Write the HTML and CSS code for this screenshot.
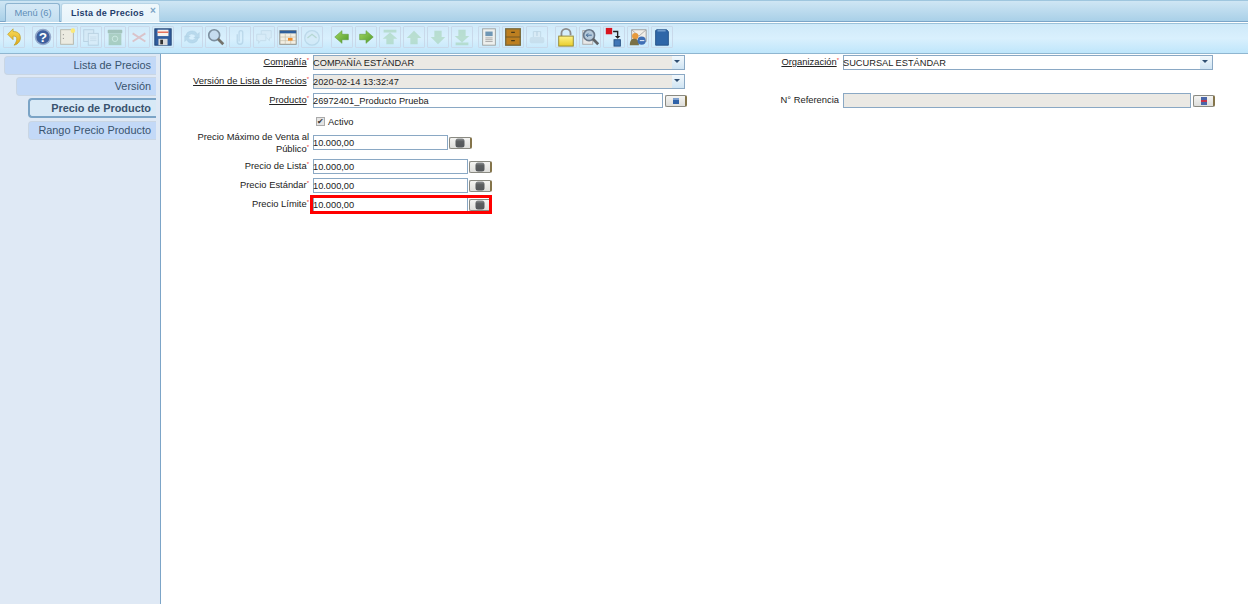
FILE: index.html
```html
<!DOCTYPE html>
<html lang="es">
<head>
<meta charset="utf-8">
<title>Lista de Precios</title>
<link rel="stylesheet" href="styles.css">
</head>
<body>
<svg class="defs" width="0" height="0" aria-hidden="true">
  <defs>
    <linearGradient id="g-yel" x1="0" y1="0" x2="0" y2="1"><stop offset="0" stop-color="#fff48a"/><stop offset="1" stop-color="#e8cc2a"/></linearGradient>
    <linearGradient id="g-back" x1="0" y1="0" x2="0" y2="1"><stop offset="0" stop-color="#f8dc5c"/><stop offset="1" stop-color="#dfa818"/></linearGradient>
    <linearGradient id="g-grn" x1="0" y1="0" x2="1" y2="1"><stop offset="0" stop-color="#a3d65f"/><stop offset="1" stop-color="#4f9a2c"/></linearGradient>
    <linearGradient id="g-calc" x1="0" y1="0" x2="0" y2="1"><stop offset="0" stop-color="#8b8e90"/><stop offset=".35" stop-color="#5b5e60"/><stop offset="1" stop-color="#54575a"/></linearGradient>
  </defs>
  <symbol id="i-calc" viewBox="0 0 10 10"><rect x=".5" y=".5" width="9" height="9" rx="2.5" fill="url(#g-calc)"/></symbol>
  <symbol id="i-search" viewBox="0 0 10 10"><rect x="2" y="2" width="6" height="6" fill="#2f62a8"/><rect x="2" y="2" width="6" height="2" fill="#7ea0cf"/></symbol>
  <symbol id="i-ref" viewBox="0 0 10 10"><rect x="2" y="1" width="6" height="8" fill="#4a66a8"/><rect x="2" y="4" width="6" height="2" fill="#c93148"/></symbol>
</svg>
<div class="app">
  <nav class="tabbar">
    <div class="tab tab-off">Menú (6)</div>
    <div class="tab tab-on">Lista de Precios<span class="tab-x">×</span></div>
  </nav>
  <div class="toolbar">
    <div class="tool-group">
      <span class="tool"><svg viewBox="0 0 20 22"><path d="M9 2 3 8l6 6v-4c3 0 4 1 4 3 0 2-1 5-3 7 5-1 7-5 7-8 0-5-3-7-8-7z" fill="url(#g-back)" stroke="#b8961e" stroke-width=".7"/></svg></span>
    </div>
    <div class="tool-group g-help">
      <span class="tool"><svg viewBox="0 0 20 22"><circle cx="10" cy="11" r="8.2" fill="#3d5f9e" stroke="#94a8ca" stroke-width="1.8"/><text x="10" y="16" class="qm">?</text></svg></span>
      <span class="tool"><svg viewBox="0 0 20 22"><rect x="3" y="3" width="14" height="16" fill="#ecebe1" stroke="#b4b4a8"/><circle cx="16.5" cy="4" r="2.5" fill="#fbe97a"/><path d="M6 8v1m0 3v1" stroke="#777"/></svg></span>
      <span class="tool off"><svg viewBox="0 0 20 22"><rect x="2" y="3" width="11" height="13" fill="#d5e6f2" stroke="#9db6c9"/><rect x="7" y="7" width="11" height="13" fill="#dcebf6" stroke="#9db6c9"/><path d="M9 11h7M9 13h7M9 15h7" stroke="#b5cada"/></svg></span>
      <span class="tool off"><svg viewBox="0 0 20 22"><rect x="2" y="3" width="16" height="4" rx="1" fill="#6f9a7d"/><rect x="3" y="7" width="14" height="13" fill="#7fb08c"/><circle cx="10" cy="13" r="3" fill="none" stroke="#c3e3cc"/></svg></span>
      <span class="tool off"><svg viewBox="0 0 20 22"><path d="M3 7l14 9M17 7 3 16" stroke="#de9a9a" stroke-width="2"/></svg></span>
      <span class="tool"><svg viewBox="0 0 20 22"><rect x="1" y="2" width="18" height="18" fill="#2f5d9e" stroke="#1f3f70"/><rect x="4" y="3" width="12" height="7" fill="#f6f3ee"/><rect x="4" y="5" width="12" height="1.5" fill="#e4654d"/><rect x="5" y="13" width="10" height="7" fill="#d9d9d9"/><rect x="7" y="14" width="3" height="5" fill="#333"/></svg></span>
    </div>
    <div class="tool-group g-a">
      <span class="tool off"><svg viewBox="0 0 20 22"><path d="M3 10a7 7 0 0 1 13-2l2-2v6h-6l2-2a5 5 0 0 0-9 1zM17 12a7 7 0 0 1-13 2l-2 2v-6h6l-2 2a5 5 0 0 0 9-1z" fill="#9cc6df" stroke="#86b2cd" stroke-width=".5"/></svg></span>
      <span class="tool"><svg viewBox="0 0 20 22"><circle cx="8" cy="9" r="6" fill="#c6dcef" stroke="#7d8f9f" stroke-width="1.8"/><path d="M12 13l6 6" stroke="#75736c" stroke-width="3"/></svg></span>
      <span class="tool off"><svg viewBox="0 0 20 22"><path d="M7 8v8a3 3 0 0 0 6 0V6a2 2 0 0 0-4 0v10" fill="none" stroke="#a3c5dc" stroke-width="1.5"/></svg></span>
      <span class="tool off"><svg viewBox="0 0 20 22"><path d="M7 4h11v8h-2v3l-3-3H7z" fill="#d8e9f4" stroke="#b5cddd"/><path d="M2 8h10v7H6l-2 3v-3H2z" fill="#d8e9f4" stroke="#b5cddd"/></svg></span>
      <span class="tool"><svg viewBox="0 0 20 22"><rect x="1" y="4" width="18" height="15" fill="#f3efe3" stroke="#8a8a80"/><rect x="1" y="4" width="18" height="3" fill="#2e5f9c"/><path d="M1 11h18M1 15h18M7 7v12M13 7v12" stroke="#c3bda9" stroke-width=".7"/><rect x="10" y="12" width="5" height="3" fill="#ef8a27"/></svg></span>
      <span class="tool off"><svg viewBox="0 0 20 22"><circle cx="10" cy="12" r="8" fill="#d2e8f5" stroke="#a4c6da" stroke-width="1.5"/><path d="M5 12l5-4 5 4" fill="none" stroke="#95c2ab" stroke-width="1.5"/></svg></span>
    </div>
    <div class="tool-group g-nav">
      <span class="tool"><svg viewBox="0 0 20 22"><path d="M2 11l8-7v4h7v6h-7v4z" fill="url(#g-grn)" stroke="#5c9a38" stroke-width=".6"/></svg></span>
      <span class="tool"><svg viewBox="0 0 20 22"><path d="M18 11l-8-7v4H3v6h7v4z" fill="url(#g-grn)" stroke="#5c9a38" stroke-width=".6"/></svg></span>
      <span class="tool off"><svg viewBox="0 0 20 22"><path d="M3 3h14v3H3zM10 6l8 7h-4v6H6v-6H2z" fill="#9bcfa8"/></svg></span>
      <span class="tool off"><svg viewBox="0 0 20 22"><path d="M10 4l8 8h-4v7H6v-7H2z" fill="#9bcfa8"/></svg></span>
      <span class="tool off"><svg viewBox="0 0 20 22"><path d="M10 19l8-8h-4V4H6v7H2z" fill="#9bcfa8"/></svg></span>
      <span class="tool off"><svg viewBox="0 0 20 22"><path d="M3 17h14v3H3zM10 17l8-7h-4V3H6v7H2z" fill="#9bcfa8"/></svg></span>
    </div>
    <div class="tool-group g-rep">
      <span class="tool"><svg viewBox="0 0 20 22"><rect x="3" y="2" width="14" height="18" fill="#eef0ee" stroke="#9a9f9e"/><rect x="6" y="5" width="8" height="5" fill="#6f97b5"/><path d="M6 12h8M6 14h8M6 16h8" stroke="#a5a5a5"/></svg></span>
      <span class="tool"><svg viewBox="0 0 20 22"><rect x="2" y="2" width="16" height="18" fill="#bd7f20" stroke="#7a6a3c" stroke-width="1.5"/><path d="M2 11h16" stroke="#6a5526"/><path d="M8 6h4M8 15h4" stroke="#4a3a18" stroke-width="1.3"/></svg></span>
      <span class="tool off"><svg viewBox="0 0 20 22"><rect x="2" y="11" width="16" height="7" rx="2" fill="#bcd2e0"/><path d="M6 11V5h8v6" fill="#dbe9f2" stroke="#aac2d2"/><path d="M10 5v5" stroke="#8fadc2"/></svg></span>
    </div>
    <div class="tool-group g-sec">
      <span class="tool"><svg viewBox="0 0 20 22"><path d="M5 11V7a5 5 0 0 1 10 0v2" fill="none" stroke="#8c8c8c" stroke-width="2"/><rect x="2" y="10" width="16" height="11" fill="url(#g-yel)" stroke="#8f8430"/></svg></span>
      <span class="tool"><svg viewBox="0 0 20 22"><rect x="2" y="4" width="11" height="15" fill="#e8e8e8" stroke="#a8a8a8"/><circle cx="9" cy="9" r="6" fill="#b5cadb" stroke="#68788a" stroke-width="1.8"/><path d="M6 9h6M6 9l2-2M6 9l2 2" stroke="#36618f"/><path d="M13 13l6 6" stroke="#5f6266" stroke-width="3"/></svg></span>
      <span class="tool"><svg viewBox="0 0 20 22"><rect x="1" y="1" width="7" height="7" fill="#d8141f"/><path d="M9 5h5v6" fill="none" stroke="#222" stroke-width="1.5"/><path d="M11 10h6l-3 3z" fill="#222"/><rect x="10" y="14" width="7" height="7" fill="#3f76b6" stroke="#274f80"/></svg></span>
      <span class="tool"><svg viewBox="0 0 20 22"><path d="M3 3h16v13H3z" fill="#f1eee8" stroke="#9a9a9a"/><path d="M3 3l8 7 8-7" fill="none" stroke="#a9a9a9"/><circle cx="7" cy="10" r="3.5" fill="#e79a3c"/><path d="M1 20c0-5 2-7 5-7s5 2 5 7z" fill="#7a7044"/><circle cx="14" cy="15" r="4.5" fill="#3f6fb5"/><path d="M12 15h5" stroke="#fff"/></svg></span>
      <span class="tool"><svg viewBox="0 0 20 22"><path d="M4 3h11l2 2v15H3V4z" fill="#2e66a8" stroke="#234f86"/><path d="M5 3h9v2H5z" fill="#6e9acb"/></svg></span>
    </div>
  </div>
  <div class="main">
    <aside class="sidebar">
      <div class="side-tab lvl0">Lista de Precios</div>
      <div class="side-tab lvl1">Versión</div>
      <div class="side-tab lvl2 active">Precio de Producto</div>
      <div class="side-tab lvl2">Rango Precio Producto</div>
    </aside>
    <section class="form">
      <div class="row r-first">
        <label class="lbl link">Compañía<i>*</i></label>
        <div class="combo ro"><span>COMPAÑÍA ESTÁNDAR</span><b></b></div>
        <label class="lbl2 link">Organización<i>*</i></label>
        <div class="combo wide"><span>SUCURSAL ESTÁNDAR</span><b></b></div>
      </div>
      <div class="row r-gap">
        <label class="lbl link">Versión de Lista de Precios<i>*</i></label>
        <div class="combo ro"><span>2020-02-14 13:32:47</span><b></b></div>
      </div>
      <div class="row r-gap">
        <label class="lbl link">Producto<i>*</i></label>
        <div class="field f-wide">
          <div class="input w350">26972401_Producto Prueba</div>
          <span class="btn b-gap"><svg viewBox="0 0 10 10"><use href="#i-search"/></svg></span>
        </div>
        <label class="lbl2">N° Referencia</label>
        <div class="field">
          <div class="input ro w348"></div>
          <span class="btn b-gap"><svg viewBox="0 0 10 10"><use href="#i-ref"/></svg></span>
        </div>
      </div>
      <div class="row r-check">
        <div class="lbl"></div>
        <div class="check"><span class="box">✔</span><span>Activo</span></div>
      </div>
      <div class="row r-max">
        <label class="lbl two">Precio Máximo de Venta al Público<i>*</i></label>
        <div class="field">
          <div class="input w135">10.000,00</div>
          <span class="btn"><svg viewBox="0 0 10 10"><use href="#i-calc"/></svg></span>
        </div>
      </div>
      <div class="row r-lista">
        <label class="lbl">Precio de Lista<i>*</i></label>
        <div class="field">
          <div class="input w155">10.000,00</div>
          <span class="btn"><svg viewBox="0 0 10 10"><use href="#i-calc"/></svg></span>
        </div>
      </div>
      <div class="row r-gap">
        <label class="lbl">Precio Estándar<i>*</i></label>
        <div class="field">
          <div class="input w155">10.000,00</div>
          <span class="btn"><svg viewBox="0 0 10 10"><use href="#i-calc"/></svg></span>
        </div>
      </div>
      <div class="row r-gap">
        <label class="lbl">Precio Límite<i>*</i></label>
        <div class="field">
          <div class="input w155">10.000,00</div>
          <span class="btn"><svg viewBox="0 0 10 10"><use href="#i-calc"/></svg></span>
          <div class="highlight"></div>
        </div>
      </div>
    </section>
  </div>
</div>
</body>
</html>
```
FILE: styles.css
```css
* { box-sizing: border-box; }
html, body { margin: 0; height: 100%; }
body { font-family: "Liberation Sans", Arial, sans-serif; font-size: 10px; color: #222; background: #fff; overflow: hidden; }
.defs { position: absolute; }
.app { width: 1248px; height: 604px; display: flex; flex-direction: column; }

.tabbar { height: 22px; display: flex; align-items: flex-end; gap: 1px; padding-left: 5px; background: linear-gradient(#cfe6f4, #a9d0e8); border-top: 1px solid #9fc6de; border-bottom: 1px solid #7ca5c8; }
.tab { height: 19px; border: 1px solid #8db4d0; border-bottom: 0; border-radius: 3px 3px 0 0; display: flex; align-items: center; font-size: 9.3px; margin-bottom: -1px; }
.tab-off { width: 55px; justify-content: center; padding-left: 1px; color: #5f8fb8; background: linear-gradient(#d6e9f6, #c2def0); }
.tab-on { width: 99px; padding-left: 9px; font-size: 9px; font-weight: bold; color: #1f3d6b; background: linear-gradient(#f0f8fc, #e6f3fa); position: relative; border-color: #b7d4e6; letter-spacing: .25px; }
.tab-x { position: absolute; right: 3px; top: 1px; font-size: 10px; color: #7ba4c6; font-weight: bold; }

.toolbar { height: 31px; margin-top: 1px; display: flex; align-items: flex-start; padding: 2px 0 0 3px; background: linear-gradient(#cfe9f9, #d9f0fd 50%, #bfe6fb); border-top: 1px solid #9cc2da; border-bottom: 1px solid #8fb6d0; }
.tool-group { display: flex; gap: 2px; }
.g-help { margin-left: 7px; }
.g-a { margin-left: 7px; }
.g-nav { margin-left: 8px; }
.g-rep { margin-left: 5px; }
.g-sec { margin-left: 7px; }
.tool { width: 22px; height: 22px; display: block; border: 1px solid #c9d9ea; border-radius: 1px; }
.tool svg { display: block; width: 20px; height: 20px; }
.tool.off svg { opacity: .5; }
.qm { font: bold 15px "Liberation Sans", sans-serif; fill: #fff; text-anchor: middle; }

.main { flex: 1; display: flex; min-height: 0; }
.sidebar { width: 161px; padding: 2px 4px 0 4px; background: #dfe9f5; border-right: 1px solid #7ca5c8; display: flex; flex-direction: column; gap: 2px; }
.side-tab { height: 19px; display: flex; align-items: center; justify-content: flex-end; padding-right: 5px; padding-bottom: 1px; font-size: 10.9px; color: #39536e; background: #c3d9f7; border: 1px solid #c9d6e4; border-right: 0; border-radius: 4px 0 0 4px; }
.lvl1 { margin-left: 12px; }
.lvl2 { margin-left: 24px; }
.active { height: 20px; font-weight: bold; background: #d8e9f6; border: 2px solid #7ba4c6; border-right: 0; }
.active + .side-tab { margin-top: 1px; }

.form { flex: 1; padding-top: 1px; }
.row { display: flex; align-items: center; height: 15px; position: relative; }
.r-gap { margin-top: 4px; }
.r-check { margin-top: 7px; height: 12px; }
.r-max { margin-top: 4px; height: 23px; }
.r-lista { margin-top: 5px; }
.lbl { width: 148px; margin-right: 4px; padding-bottom: 2px; text-align: right; font-size: 9.4px; line-height: 12px; }
.lbl2 { width: 154px; margin-right: 4px; padding-bottom: 2px; text-align: right; font-size: 9.4px; line-height: 12px; }
.two { padding-left: 30px; padding-bottom: 0; }
.link { text-decoration: underline; }
.lbl i, .lbl2 i { color: #e33; font-style: normal; font-size: 6px; line-height: 5px; vertical-align: 3px; text-decoration: none; display: inline-block; }

.combo, .input { height: 15px; border: 1px solid #8aa8c4; background: #fff; font-size: 9.25px; color: #222; line-height: 14px; white-space: nowrap; text-indent: -1px; }
.combo { width: 372px; display: flex; justify-content: space-between; }
.combo.wide { width: 370px; }
.combo.ro, .input.ro { background: #ebe9e4; }
.combo b { width: 12px; height: 13px; background: linear-gradient(#f2f8fc, #cfe4f3); position: relative; }
.combo b::after { content: ""; position: absolute; left: 2px; top: 4px; border-style: solid; border-color: #2f4f72 transparent transparent; border-width: 3px 3.5px 0; }
.field { display: flex; align-items: center; position: relative; }
.f-wide { width: 372px; }
.w135 { width: 135px; }
.w155 { width: 155px; }
.w350 { width: 350px; flex: none; }
.w348 { width: 348px; }
.btn { width: 23px; height: 12px; margin-left: 1px; display: flex; justify-content: center; align-items: center; flex: none; background: linear-gradient(#f4f4f2, #dededb); border: 1px solid #8a8a82; border-right: 2px solid #84744a; border-radius: 2px; }
.btn svg { display: block; width: 10px; height: 10px; }
.b-gap { width: 22px; margin-left: 2px; }
.check { display: flex; align-items: center; gap: 3px; font-size: 9.4px; padding-left: 3px; }
.box { width: 9px; height: 9px; border: 1px solid #aaa; background: #e4e4e4; font-size: 8px; line-height: 8px; text-align: center; color: #333; }
.highlight { position: absolute; left: -3px; top: -2px; width: 182px; height: 19px; border: 3px solid #f00; }
```
